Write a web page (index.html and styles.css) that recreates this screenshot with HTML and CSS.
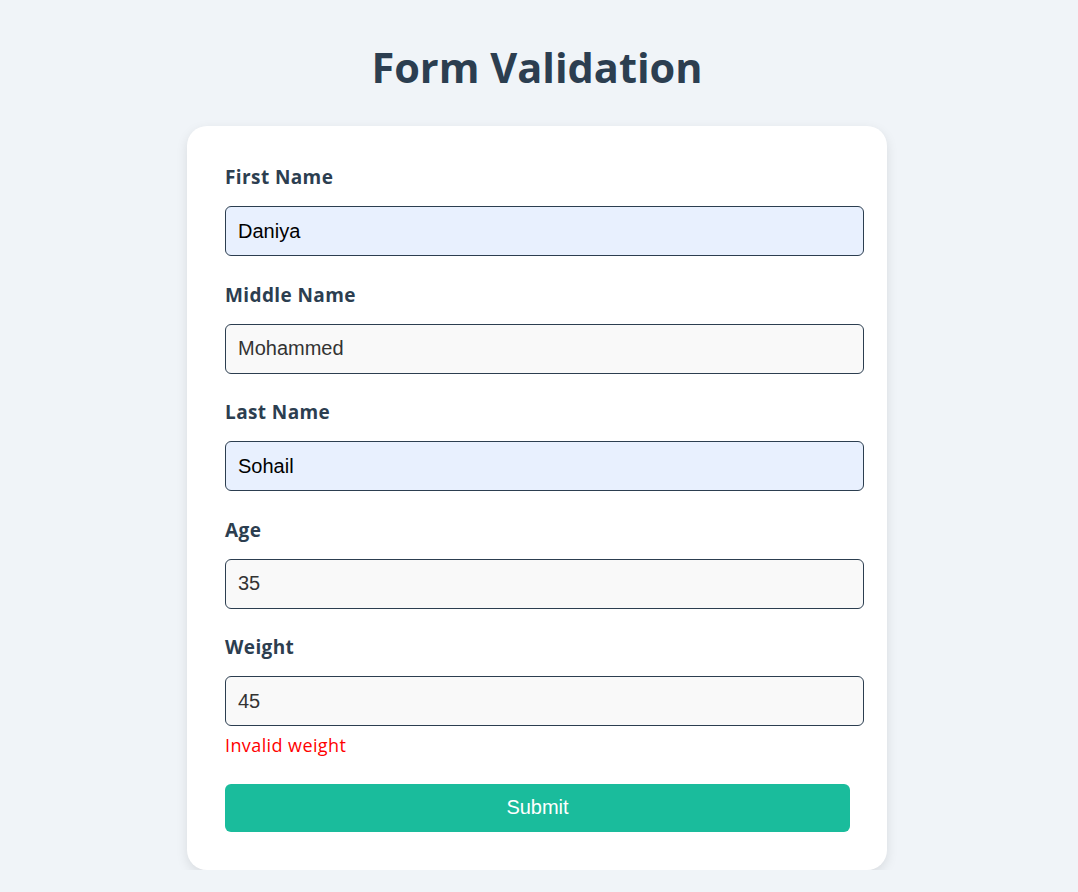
FILE: index.html
```html
<!DOCTYPE html>
<html lang="en">
<head>
<meta charset="utf-8">
<title>Form Validation</title>
<link rel="stylesheet" href="styles.css">
</head>
<body>
<h1 class="title">Form Validation</h1>
<form class="card">
  <div class="field">
    <label class="label">First Name</label>
    <input class="input autofill" type="text" value="Daniya">
  </div>
  <div class="field">
    <label class="label">Middle Name</label>
    <input class="input" type="text" value="Mohammed">
  </div>
  <div class="field">
    <label class="label">Last Name</label>
    <input class="input autofill" type="text" value="Sohail">
  </div>
  <div class="field">
    <label class="label">Age</label>
    <input class="input" type="text" value="35">
  </div>
  <div class="field last">
    <label class="label">Weight</label>
    <input class="input" type="text" value="45">
    <div class="error">Invalid weight</div>
  </div>
  <button class="submit" type="button">Submit</button>
</form>
</body>
</html>
```

FILE: styles.css
```css
* { box-sizing: border-box; }
html, body { margin: 0; padding: 0; }
body {
  background: #f0f4f8;
  font-family: "Open Sans", "Noto Sans", sans-serif;
  color: #2c3e50;
  padding: 37px 4px 0 0;
}
.title {
  margin: 0 0 29px;
  text-align: center;
  font-size: 41.5px;
  line-height: 60px;
  font-weight: 700;
  color: #2c3e50;
}
.card {
  width: 700px;
  margin: 0 auto;
  background: #ffffff;
  border-radius: 20px;
  padding: 38px 37px 38px 38px;
  box-shadow: 0 4px 12px rgba(0, 0, 0, 0.1);
}
.field {
  display: flex;
  flex-direction: column;
  align-items: flex-start;
  margin-bottom: 25.5px;
}
.label {
  font-size: 19px;
  line-height: 27px;
  font-weight: 700;
  letter-spacing: 0.4px;
  color: #2c3e50;
  margin-bottom: 15px;
}
.input {
  width: 639px;
  height: 50px;
  padding: 0 12px;
  border: 1px solid #2c3e50;
  border-radius: 6px;
  background: #f9f9f9;
  color: #333333;
  font-family: "Liberation Sans", Arial, sans-serif;
  font-size: 20px;
  outline: none;
}
.input.autofill {
  background: #e8f0fe;
  color: #000000;
}
.error {
  margin-top: 7px;
  color: #ff0000;
  font-size: 18px;
  line-height: 25px;
  letter-spacing: 0.4px;
}
.submit {
  display: block;
  width: 100%;
  height: 48px;
  border: none;
  border-radius: 6px;
  background: #1abc9c;
  color: #ffffff;
  font-family: "Liberation Sans", Arial, sans-serif;
  font-size: 20px;
  cursor: pointer;
}
```
